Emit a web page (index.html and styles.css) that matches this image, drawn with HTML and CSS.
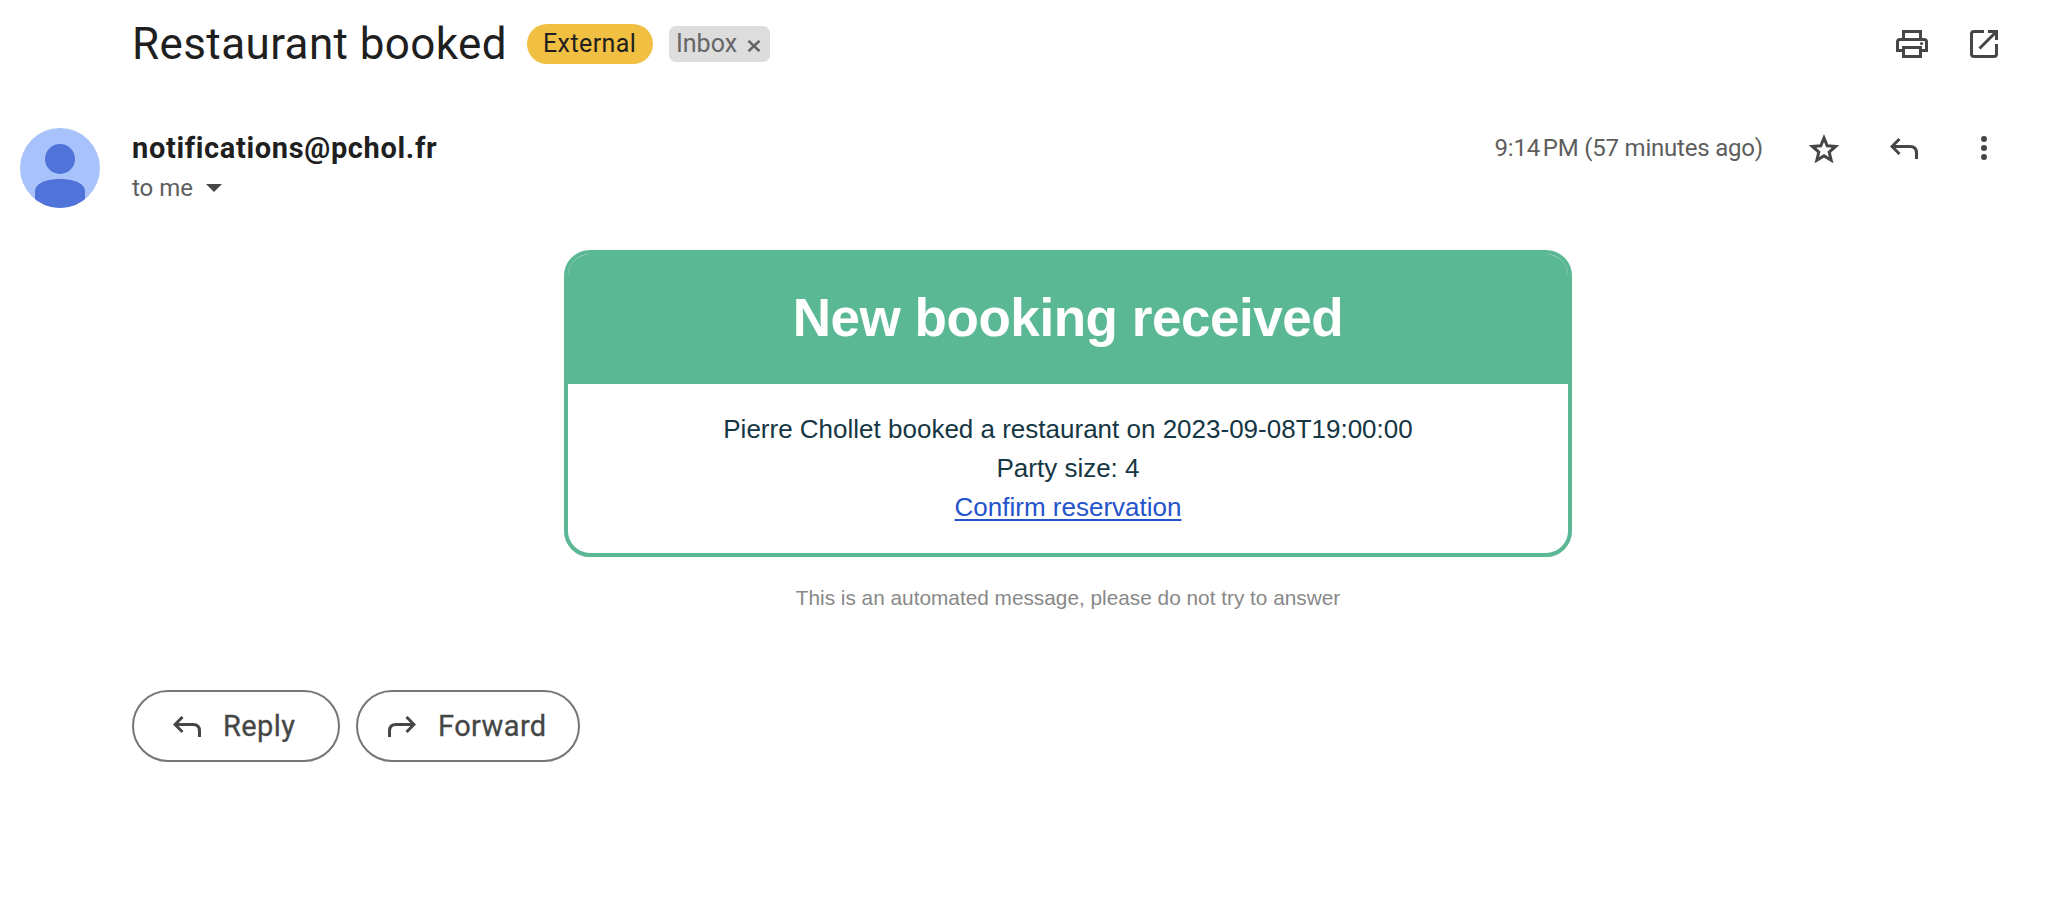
FILE: index.html
```html
<!DOCTYPE html>
<html lang="en">
<head>
<meta charset="utf-8">
<title>Restaurant booked</title>
<link rel="stylesheet" href="styles.css">
</head>
<body>
<header class="subject">
  <h1 class="subject-title">Restaurant booked</h1>
  <span class="tag-external">External</span>
  <span class="tag-inbox">Inbox
    <svg class="tag-close" width="14" height="12" viewBox="0 0 14 12"><path d="M1.5.8l11 10.4M12.5.8l-11 10.4" fill="none" stroke="currentColor" stroke-width="2.6"/></svg>
  </span>
  <div class="subject-actions">
    <svg width="32" height="28" viewBox="0 0 32 28"><path fill="none" stroke="currentColor" stroke-width="3" d="M7.5 9V1.5h17V9M7.5 20.500H1.500V12q0-2.500 2.500-2.500h24q2.500 0 2.500 2.500v8.500h-6M7.500 17.500h17v9h-17z"/><circle cx="25.500" cy="13.500" r="1.600" fill="currentColor"/></svg>
    <svg width="28" height="28" viewBox="0 0 28 28"><path fill="none" stroke="currentColor" stroke-width="3" d="M14 1.500H4Q1.500 1.500 1.500 4v20q0 2.500 2.500 2.500h20q2.500 0 2.500-2.500V14M18 1.500h8.500V10M26 2L9.500 18.500"/></svg>
  </div>
</header>

<section class="sender">
  <svg class="avatar" width="80" height="80" viewBox="0 0 80 80">
    <defs><clipPath id="disc"><circle cx="40" cy="40" r="40"/></clipPath></defs>
    <g clip-path="url(#disc)"><path fill="#a8c2fb" d="M0 0h80v80H0z"/><circle cx="40" cy="31" r="15" fill="#4f73d9"/><path fill="#4f73d9" d="M15 80V63.500C15 55 27 51 40 51s25 4 25 12.500V80z"/></g>
  </svg>
  <div class="sender-text">
    <div class="sender-name">notifications@pchol.fr</div>
    <div class="sender-to">to me<svg width="16" height="8" viewBox="0 0 16 8"><path fill="#444746" d="M0 0h16L8 8z"/></svg></div>
  </div>
  <div class="sender-meta">
    <span class="time">9:14&#8239;PM (57 minutes ago)</span>
    <svg class="star" width="32" height="30" viewBox="0 0 32 30"><path fill="none" stroke="currentColor" stroke-width="3" d="M16 4l3.200 7.800 8.400.7-6.400 5.500 1.950 8.200L16 21.850 8.850 26.200l1.950-8.200-6.400-5.500 8.400-.7z"/></svg>
    <svg class="reply" width="28" height="22" viewBox="0 0 28 22"><path fill="none" stroke="currentColor" stroke-width="3" d="M9.500 1L2 8.500 9.500 16M2 8.500h18q6.500 0 6.500 6.500v6"/></svg>
    <svg class="more" width="6" height="24" viewBox="0 0 6 24"><g fill="currentColor"><circle cx="3" cy="3" r="3"/><circle cx="3" cy="12" r="3"/><circle cx="3" cy="21" r="3"/></g></svg>
  </div>
</section>

<main class="message">
  <article class="card">
    <h2 class="card-head">New booking received</h2>
    <div class="card-body">
      <p>Pierre Chollet booked a restaurant on 2023-09-08T19:00:00</p>
      <p>Party size: 4</p>
      <p><a class="confirm" href="#">Confirm reservation</a></p>
    </div>
  </article>
  <p class="footnote">This is an automated message, please do not try to answer</p>
</main>

<footer class="actions">
  <button class="action action-reply"><svg width="28" height="22" viewBox="0 0 28 22"><path fill="none" stroke="currentColor" stroke-width="3" d="M9.500 1L2 8.500 9.500 16M2 8.500h18q6.500 0 6.500 6.500v6"/></svg><span>Reply</span></button>
  <button class="action action-forward"><svg width="28" height="22" viewBox="0 0 28 22"><path fill="none" stroke="currentColor" stroke-width="3" d="M18.500 1L26 8.500 18.500 16M26 8.500H8q-6.500 0-6.500 6.500v6"/></svg><span>Forward</span></button>
</footer>
</body>
</html>
```
FILE: styles.css
```css
* { box-sizing: border-box; }
body {
  margin: 0;
  background: #fff;
  color: #444746;
  font-family: Roboto, "Open Sans", sans-serif;
}
h1, h2, p { margin: 0; font-weight: 400; }
svg { display: block; flex: none; }

.subject {
  display: flex;
  align-items: center;
  height: 88px;
  padding: 0 48px 0 132px;
}
.subject-title {
  width: 395px;
  color: #1f1f1f;
  font-size: 44px;
  line-height: 52px;
  letter-spacing: .4px;
  white-space: nowrap;
}
.tag-external {
  width: 126px;
  height: 40px;
  padding-left: 16px;
  border-radius: 20px;
  background: #f1bf42;
  color: #1f1f1f;
  font-size: 25px;
  line-height: 40px;
  letter-spacing: .4px;
}
.tag-inbox {
  display: flex;
  align-items: center;
  justify-content: space-between;
  width: 101px;
  height: 36px;
  margin-left: 16px;
  padding: 0 9px 0 7px;
  border-radius: 7px;
  background: #ddd;
  color: #666;
  font-size: 25px;
  line-height: 36px;
}
.tag-close { margin-top: 3px; }
.subject-actions {
  display: flex;
  gap: 42px;
  margin-left: auto;
}

.sender {
  display: flex;
  height: 162px;
  padding: 40px 59px 0 20px;
}
.sender-text { padding: 3px 0 0 32px; }
.sender-name {
  color: #1f1f1f;
  font-size: 29px;
  font-weight: 700;
  line-height: 34px;
  letter-spacing: .65px;
}
.sender-to {
  display: flex;
  align-items: center;
  gap: 13px;
  margin-top: 8px;
  color: #5e5e5e;
  font-size: 24px;
  line-height: 30px;
}
.sender-meta {
  display: flex;
  align-items: center;
  height: 40px;
  margin-left: auto;
}
.time {
  color: #5e5e5e;
  font-size: 24px;
  letter-spacing: -.2px;
  margin-right: 45px;
}
.star { margin: 2px 50px 0 0; }
.reply { margin: 1px 63px 0 0; }

.message {
  width: 1008px;
  margin-left: 564px;
  font-family: "Liberation Sans", Arial, sans-serif;
  text-align: center;
}
.card {
  border: 4px solid #5ab894;
  border-radius: 26px;
}
.card-head {
  height: 130px;
  border-radius: 22px 22px 0 0;
  background: #5ab894;
  color: #fff;
  font-size: 53px;
  font-weight: 700;
  line-height: 128px;
  letter-spacing: -.45px;
}
.card-body {
  padding: 26px 0;
  color: #153643;
  font-size: 26px;
  line-height: 39px;
}
.confirm {
  color: #2453cb;
  text-decoration-thickness: 2px;
  text-underline-offset: 3px;
}
.footnote {
  margin-top: 26px;
  color: #888;
  font-size: 20.8px;
  line-height: 30px;
}

.actions {
  display: flex;
  gap: 16px;
  margin: 77px 0 0 132px;
}
.action {
  display: flex;
  align-items: center;
  height: 72px;
  border: 2px solid #747775;
  border-radius: 36px;
  background: #fff;
  color: #444746;
  font: 400 29px/32px Roboto, "Open Sans", sans-serif;
  letter-spacing: .4px;
  -webkit-text-stroke: .3px #444746;
}
.action svg { margin-top: 1px; }
.action-reply { width: 208px; padding: 0 0 0 39px; gap: 22px; }
.action-forward { width: 224px; padding: 0 0 0 30px; gap: 22px; }
```
